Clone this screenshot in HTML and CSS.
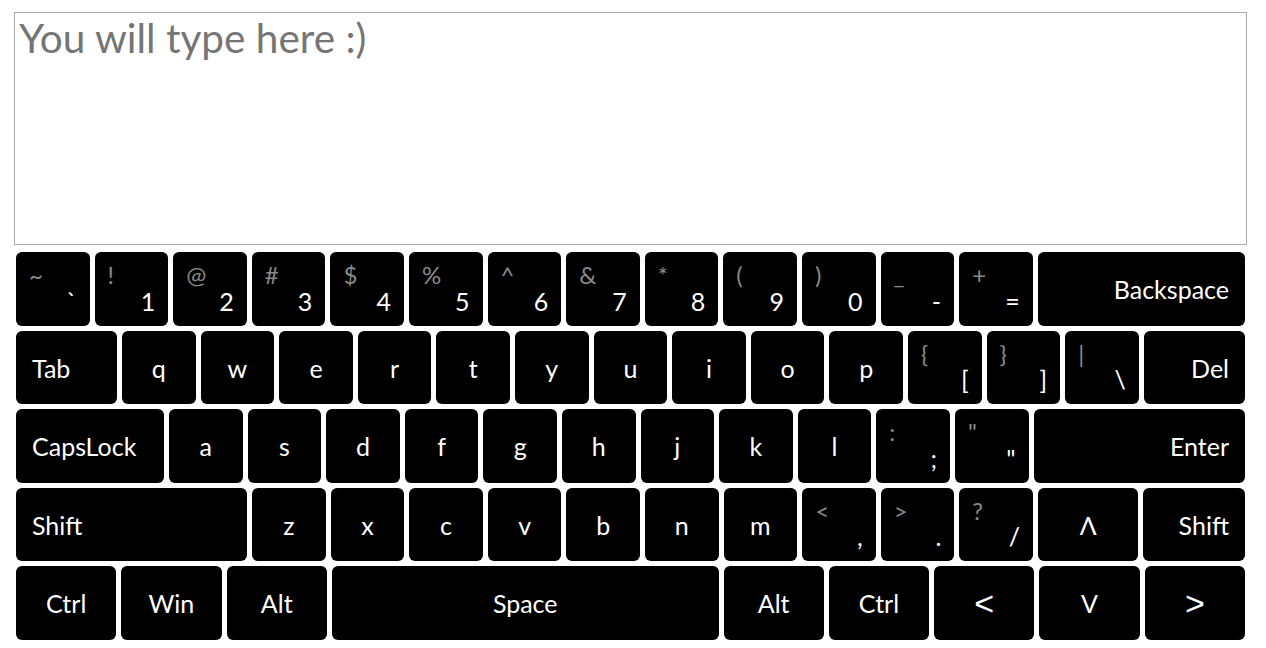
FILE: index.html
```html
<!DOCTYPE html>
<html lang="en">
<head>
<meta charset="utf-8">
<title>Virtual Keyboard</title>
<link rel="stylesheet" href="styles.css">
</head>
<body>
<div class="page">
  <textarea class="typing" placeholder="You will type here :)"></textarea>
  <div class="keyboard">
    <div class="row">
      <div class="key dual"><span class="alt">~</span><span class="main">`</span></div>
      <div class="key dual"><span class="alt">!</span><span class="main">1</span></div>
      <div class="key dual"><span class="alt">@</span><span class="main">2</span></div>
      <div class="key dual"><span class="alt">#</span><span class="main">3</span></div>
      <div class="key dual"><span class="alt">$</span><span class="main">4</span></div>
      <div class="key dual"><span class="alt">%</span><span class="main">5</span></div>
      <div class="key dual"><span class="alt">^</span><span class="main">6</span></div>
      <div class="key dual"><span class="alt">&amp;</span><span class="main">7</span></div>
      <div class="key dual"><span class="alt">*</span><span class="main">8</span></div>
      <div class="key dual"><span class="alt">(</span><span class="main">9</span></div>
      <div class="key dual"><span class="alt">)</span><span class="main">0</span></div>
      <div class="key dual"><span class="alt">_</span><span class="main">-</span></div>
      <div class="key dual"><span class="alt">+</span><span class="main">=</span></div>
      <div class="key fill right">Backspace</div>
    </div>
    <div class="row">
      <div class="key w101 left">Tab</div>
      <div class="key">q</div>
      <div class="key">w</div>
      <div class="key">e</div>
      <div class="key">r</div>
      <div class="key">t</div>
      <div class="key">y</div>
      <div class="key">u</div>
      <div class="key">i</div>
      <div class="key">o</div>
      <div class="key">p</div>
      <div class="key dual"><span class="alt">{</span><span class="main">[</span></div>
      <div class="key dual"><span class="alt">}</span><span class="main">]</span></div>
      <div class="key dual"><span class="alt">|</span><span class="main">\</span></div>
      <div class="key fill right">Del</div>
    </div>
    <div class="row">
      <div class="key w148 left">CapsLock</div>
      <div class="key">a</div>
      <div class="key">s</div>
      <div class="key">d</div>
      <div class="key">f</div>
      <div class="key">g</div>
      <div class="key">h</div>
      <div class="key">j</div>
      <div class="key">k</div>
      <div class="key">l</div>
      <div class="key dual"><span class="alt">:</span><span class="main">;</span></div>
      <div class="key dual"><span class="alt">"</span><span class="main">"</span></div>
      <div class="key fill right">Enter</div>
    </div>
    <div class="row">
      <div class="key w231 left">Shift</div>
      <div class="key">z</div>
      <div class="key">x</div>
      <div class="key">c</div>
      <div class="key">v</div>
      <div class="key">b</div>
      <div class="key">n</div>
      <div class="key">m</div>
      <div class="key dual"><span class="alt">&lt;</span><span class="main">,</span></div>
      <div class="key dual"><span class="alt">&gt;</span><span class="main">.</span></div>
      <div class="key dual"><span class="alt">?</span><span class="main">/</span></div>
      <div class="key w100">Λ</div>
      <div class="key fill right">Shift</div>
    </div>
    <div class="row">
      <div class="key w100">Ctrl</div>
      <div class="key w100">Win</div>
      <div class="key w100">Alt</div>
      <div class="key fill">Space</div>
      <div class="key w100">Alt</div>
      <div class="key w100">Ctrl</div>
      <div class="key w100 arrow">&lt;</div>
      <div class="key w100">V</div>
      <div class="key w100 arrow">&gt;</div>
    </div>
  </div>
</div>
</body>
</html>
```

FILE: styles.css
```css
html, body {
  margin: 0;
  padding: 0;
  background: #ffffff;
}

.page {
  padding: 12px 0 0 14px;
  font-family: Lato, "Open Sans", sans-serif;
}

.typing {
  display: block;
  box-sizing: border-box;
  width: 1233px;
  height: 233px;
  margin: 0;
  padding: 1px 4px;
  border: 1px solid #a9a9a9;
  font-family: Lato, sans-serif;
  font-size: 40.5px;
  line-height: 1.2;
  color: #222;
  resize: none;
  outline: none;
}

.typing::placeholder {
  color: #757575;
}

.keyboard {
  display: flex;
  flex-direction: column;
  gap: 5px;
  width: 1229px;
  margin: 7px 0 0 2px;
}

.row {
  display: flex;
  gap: 5px;
  height: 73.5px;
}

.key {
  box-sizing: border-box;
  flex: 0 0 73.6px;
  display: flex;
  align-items: center;
  justify-content: center;
  padding-top: 1px;
  background: #000;
  color: #fff;
  border-radius: 6px;
  font-size: 25px;
  line-height: 1.2;
}

.key.w100 { flex-basis: 100.3px; }
.key.w101 { flex-basis: 101px; }
.key.w148 { flex-basis: 148px; }
.key.w231 { flex-basis: 231px; }
.key.fill { flex: 1 1 0; }

.key.left {
  justify-content: flex-start;
  padding-left: 16px;
}

.key.right {
  justify-content: flex-end;
  padding-right: 16px;
}

.key.dual {
  flex-direction: column;
  align-items: stretch;
  justify-content: flex-start;
  padding: 9px 13px 0 13px;
}

.key.dual .alt {
  align-self: flex-start;
  color: #8a8a8a;
  font-size: 24px;
  line-height: 28.8px;
}

.key.dual .main {
  align-self: flex-end;
  line-height: 23px;
}

.key.arrow {
  font-family: "Liberation Sans", Arial, sans-serif;
  font-size: 34px;
  line-height: 1;
}
```
